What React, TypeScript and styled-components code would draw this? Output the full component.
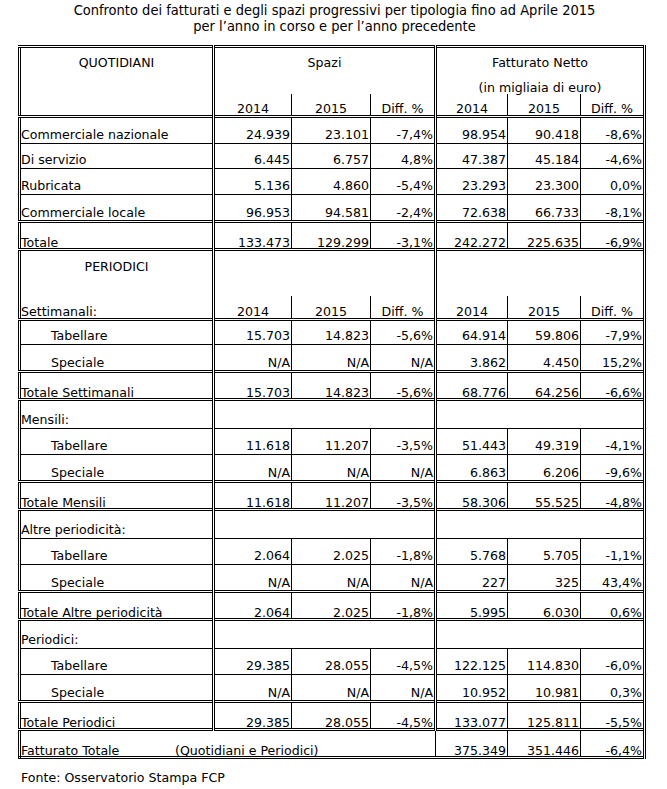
import React from "react";
import styled, { createGlobalStyle, css } from "styled-components";

type Sep = "d" | "s" | "n";
type Kind = "reg" | "regd" | "tot" | "sub" | "head" | "h2a" | "h2b";

const line = (s?: Sep) =>
  s === "d" ? "3px double #000" : s === "s" ? "1px solid #000" : "none";

const Global = createGlobalStyle`
  html, body { margin: 0; padding: 0; background: #fff; }
  body {
    font-family: "DejaVu Sans", Verdana, sans-serif;
    color: #000;
  }
`;

const Page = styled.div`
  width: 667px;
  padding-top: 2px;
`;

const Title = styled.div`
  font-family: "DejaVu Sans Condensed", "DejaVu Sans", sans-serif;
  font-size: 14.5px;
  line-height: 16px;
  text-align: center;
  padding-left: 2px;
`;

const Table = styled.table`
  margin: 11px 0 0 18px;
  border-collapse: collapse;
  table-layout: fixed;
  width: 628px;
  font-size: 12.6px;
  border: 3px double #000;
`;

const Col = styled.col<{ $w: number }>`
  width: ${(p) => p.$w}px;
`;

const kindCss: Record<Kind, ReturnType<typeof css>> = {
  reg: css`line-height: 13px; padding-bottom: 2px;`,
  regd: css`line-height: 13px; padding-bottom: 1px;`,
  tot: css`line-height: 11px; padding-bottom: 0;`,
  sub: css`line-height: 13px; padding-bottom: 2px;`,
  head: css`line-height: 13px; padding-bottom: 0;`,
  h2a: css`line-height: 13px; padding-bottom: 0;`,
  h2b: css`line-height: 13px; padding-bottom: 0;`,
};

const Row = styled.tr<{ $h: number; $top?: Sep; $kind: Kind }>`
  height: ${(p) => p.$h}px;
  border-top: ${(p) => line(p.$top)};
  & > td {
    ${(p) => kindCss[p.$kind]}
  }
`;

const Cell = styled.td<{ $sep?: Sep }>`
  padding-top: 0;
  padding-left: 1px;
  padding-right: 1px;
  vertical-align: bottom;
  white-space: nowrap;
  border-right: ${(p) => line(p.$sep ?? "s")};
`;

const Num = styled(Cell)`
  text-align: right;
`;

const Label = styled(Cell)<{ $indent?: boolean }>`
  text-align: left;
  padding-left: ${(p) => (p.$indent ? 30 : 0)}px;
`;

const Year = styled(Cell)`
  text-align: center;
`;

const HeadCell = styled(Cell)`
  && {
    vertical-align: top;
    padding-top: 8px;
  }
  text-align: center;
`;

const SectionLabel = styled(Cell)`
  && {
    vertical-align: top;
    padding: 9px 0 0 0;
  }
`;

const SectionStack = styled.div`
  display: flex;
  flex-direction: column;
  justify-content: space-between;
  height: 58px;
`;

const Centered = styled.div`
  text-align: center;
`;

const SecondLine = styled.div`
  margin-top: 12px;
`;

const Tab = styled.span`
  display: inline-block;
  width: 154px;
`;

const Footer = styled.div`
  font-size: 12.6px;
  line-height: 15px;
  padding: 11px 0 0 21px;
`;

type Vals = [string, string, string, string, string, string];

const Years = () => (
  <>
    <Year>2014</Year>
    <Year>2015</Year>
    <Year $sep="d">Diff. %</Year>
    <Year>2014</Year>
    <Year>2015</Year>
    <Year $sep="d">Diff. %</Year>
  </>
);

const Values = ({ v }: { v: Vals }) => (
  <>
    <Num>{v[0]}</Num>
    <Num>{v[1]}</Num>
    <Num $sep="d">{v[2]}</Num>
    <Num>{v[3]}</Num>
    <Num>{v[4]}</Num>
    <Num $sep="d">{v[5]}</Num>
  </>
);

const DataRow = ({
  label,
  v,
  kind,
  h,
  top,
  indent,
}: {
  label: string;
  v: Vals;
  kind: Kind;
  h: number;
  top: Sep;
  indent?: boolean;
}) => (
  <Row $h={h} $top={top} $kind={kind}>
    <Label $sep="d" $indent={indent}>
      {label}
    </Label>
    <Values v={v} />
  </Row>
);

const SubHead = ({ label, top }: { label: string; top: Sep }) => (
  <Row $h={29} $top={top} $kind="sub">
    <Label $sep="d">{label}</Label>
    <Cell colSpan={3} $sep="d" />
    <Cell colSpan={3} $sep="d" />
  </Row>
);

type Section = {
  title: string;
  tab: Vals;
  spec: Vals;
  totLabel: string;
  tot: Vals;
};

const sections: Section[] = [
  {
    title: "Mensili:",
    tab: ["11.618", "11.207", "-3,5%", "51.443", "49.319", "-4,1%"],
    spec: ["N/A", "N/A", "N/A", "6.863", "6.206", "-9,6%"],
    totLabel: "Totale Mensili",
    tot: ["11.618", "11.207", "-3,5%", "58.306", "55.525", "-4,8%"],
  },
  {
    title: "Altre periodicità:",
    tab: ["2.064", "2.025", "-1,8%", "5.768", "5.705", "-1,1%"],
    spec: ["N/A", "N/A", "N/A", "227", "325", "43,4%"],
    totLabel: "Totale Altre periodicità",
    tot: ["2.064", "2.025", "-1,8%", "5.995", "6.030", "0,6%"],
  },
  {
    title: "Periodici:",
    tab: ["29.385", "28.055", "-4,5%", "122.125", "114.830", "-6,0%"],
    spec: ["N/A", "N/A", "N/A", "10.952", "10.981", "0,3%"],
    totLabel: "Totale Periodici",
    tot: ["29.385", "28.055", "-4,5%", "133.077", "125.811", "-5,5%"],
  },
];

const quotidiani: { label: string; v: Vals; h: number; kind: Kind }[] = [
  { label: "Commerciale nazionale", v: ["24.939", "23.101", "-7,4%", "98.954", "90.418", "-8,6%"], h: 27, kind: "reg" },
  { label: "Di servizio", v: ["6.445", "6.757", "4,8%", "47.387", "45.184", "-4,6%"], h: 25, kind: "reg" },
  { label: "Rubricata", v: ["5.136", "4.860", "-5,4%", "23.293", "23.300", "0,0%"], h: 26, kind: "reg" },
  { label: "Commerciale locale", v: ["96.953", "94.581", "-2,4%", "72.638", "66.733", "-8,1%"], h: 27, kind: "regd" },
];

export default function App() {
  return (
    <Page>
      <Global />
      <Title>
        Confronto dei fatturati e degli spazi progressivi per tipologia fino ad Aprile 2015
        <br />
        per l’anno in corso e per l’anno precedente
      </Title>
      <Table>
        <colgroup>
          <Col $w={194} />
          <Col $w={78} />
          <Col $w={79} />
          <Col $w={65} />
          <Col $w={72} />
          <Col $w={73} />
          <Col $w={64} />
        </colgroup>
        <tbody>
          <Row $h={47} $top="d" $kind="head">
            <HeadCell rowSpan={2} $sep="d">
              QUOTIDIANI
            </HeadCell>
            <HeadCell colSpan={3} $sep="d">
              Spazi
            </HeadCell>
            <HeadCell colSpan={3} $sep="d">
              Fatturato Netto
              <SecondLine>(in migliaia di euro)</SecondLine>
            </HeadCell>
          </Row>
          <Row $h={22} $kind="h2a">
            <Years />
          </Row>
          {quotidiani.map((r, i) => (
            <DataRow key={r.label} label={r.label} v={r.v} h={r.h} kind={r.kind} top={i === 0 ? "d" : "s"} />
          ))}
          <DataRow
            label="Totale"
            v={["133.473", "129.299", "-3,1%", "242.272", "225.635", "-6,9%"]}
            h={28}
            kind="tot"
            top="d"
          />
          <Row $h={47} $top="d" $kind="head">
            <SectionLabel rowSpan={2} $sep="d">
              <SectionStack>
                <Centered>PERIODICI</Centered>
                <div>Settimanali:</div>
              </SectionStack>
            </SectionLabel>
            <Cell colSpan={3} $sep="d" />
            <Cell colSpan={3} $sep="d" />
          </Row>
          <Row $h={23} $kind="h2b">
            <Years />
          </Row>
          <DataRow
            label="Tabellare"
            indent
            v={["15.703", "14.823", "-5,6%", "64.914", "59.806", "-7,9%"]}
            h={25}
            kind="reg"
            top="d"
          />
          <DataRow
            label="Speciale"
            indent
            v={["N/A", "N/A", "N/A", "3.862", "4.450", "15,2%"]}
            h={27}
            kind="regd"
            top="s"
          />
          <DataRow
            label="Totale Settimanali"
            v={["15.703", "14.823", "-5,6%", "68.776", "64.256", "-6,6%"]}
            h={28}
            kind="tot"
            top="d"
          />
          {sections.map((s) => (
            <React.Fragment key={s.title}>
              <SubHead label={s.title} top="d" />
              <DataRow label="Tabellare" indent v={s.tab} h={26} kind="reg" top="s" />
              <DataRow label="Speciale" indent v={s.spec} h={27} kind="regd" top="s" />
              <DataRow label={s.totLabel} v={s.tot} h={28} kind="tot" top="d" />
            </React.Fragment>
          ))}
          <Row $h={28} $top="d" $kind="tot">
            <Label colSpan={4} $sep="s">
              <Tab>Fatturato Totale</Tab>(Quotidiani e Periodici)
            </Label>
            <Num>375.349</Num>
            <Num>351.446</Num>
            <Num $sep="d">-6,4%</Num>
          </Row>
        </tbody>
      </Table>
      <Footer>Fonte: Osservatorio Stampa FCP</Footer>
    </Page>
  );
}
